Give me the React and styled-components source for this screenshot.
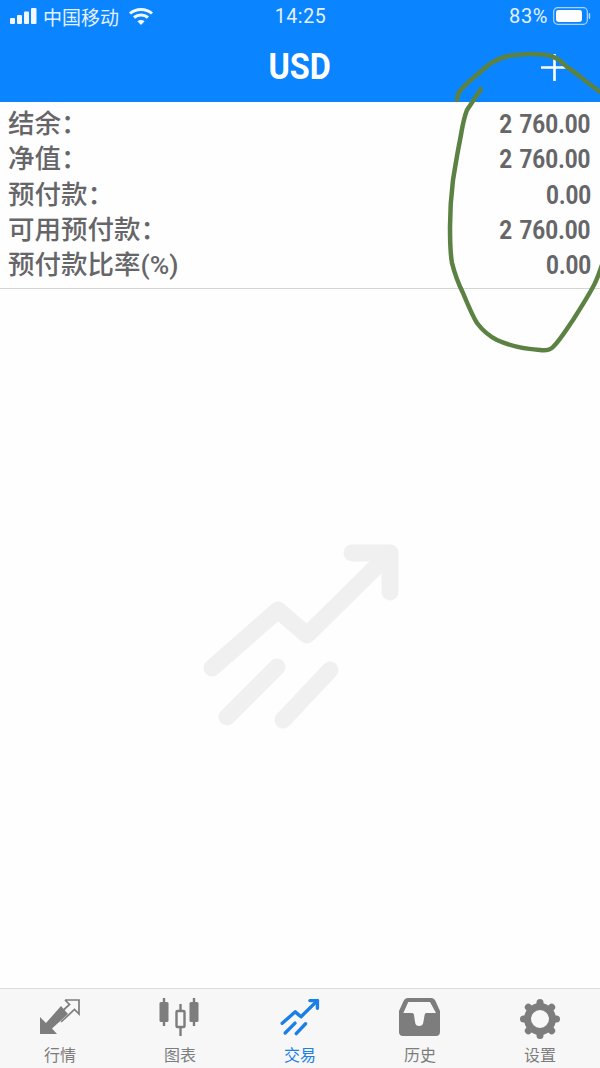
import React from "react";
import styled, { createGlobalStyle } from "styled-components";

const GlobalStyle = createGlobalStyle`
  html, body {
    margin: 0;
    padding: 0;
    background: #fff;
  }
`;

const CJK = `"Noto Sans CJK SC", "Noto Sans", sans-serif`;
const BLUE = "#0a84ff";

const Page = styled.div`
  position: relative;
  width: 600px;
  height: 1068px;
  display: flex;
  flex-direction: column;
  overflow: hidden;
  background: #fefefe;
  font-family: Roboto, ${CJK};
`;

const Header = styled.header`
  height: 102px;
  flex: none;
  background: ${BLUE};
  color: #fff;
  display: flex;
  flex-direction: column;
`;

const StatusBar = styled.div`
  height: 32px;
  padding: 0 9px 0 10px;
  display: grid;
  grid-template-columns: 1fr auto 1fr;
  align-items: center;
  font-size: 20px;
  color: #e4f1ff;
`;

const StatusLeft = styled.div`
  display: flex;
  align-items: center;
  gap: 5px;
  font-family: ${CJK};
  font-size: 19px;
`;

const StatusRight = styled.div`
  display: flex;
  align-items: center;
  justify-content: flex-end;
  gap: 5px;
  letter-spacing: 0.6px;
`;

const Time = styled.div`
  font-size: 19.5px;
  letter-spacing: 0.6px;
`;

const Wifi = styled.svg`
  margin-left: 4px;
`;

const TitleBar = styled.div`
  flex: 1;
  display: grid;
  grid-template-columns: 1fr auto 1fr;
  align-items: center;
`;

const Title = styled.h1`
  grid-column: 2;
  margin: 0;
  font-size: 36px;
  font-weight: 700;
  line-height: 1;
  transform: scaleX(0.9);
`;

const PlusButton = styled.div`
  grid-column: 3;
  justify-self: end;
  display: flex;
  margin-right: 32px;
`;

const Summary = styled.section`
  flex: none;
  height: 187px;
  padding-top: 3px;
  box-sizing: border-box;
  border-bottom: 1px solid #d4d4d4;
`;

const Row = styled.div`
  height: 35.3px;
  padding: 0 9px 0 8px;
  display: flex;
  align-items: center;
  justify-content: space-between;
  color: #666669;
`;

const Label = styled.span`
  font-size: 26.5px;
  font-weight: 500;
  padding-bottom: 2px;
`;

const Value = styled.span`
  font-size: 25px;
  font-weight: 700;
  word-spacing: 2px;
  display: inline-block;
  padding-top: 4px;
  transform: scaleX(0.9);
  transform-origin: right center;
`;

const Empty = styled.main`
  flex: 1;
  display: flex;
  align-items: center;
  justify-content: center;
  padding: 0 0 6px 3px;
`;

const TabBar = styled.nav`
  flex: none;
  height: 79px;
  display: grid;
  grid-template-columns: repeat(5, 120px);
  background: #f7f7f7;
  border-top: 1px solid #dcdcdc;
`;

const Tab = styled.div`
  display: flex;
  flex-direction: column;
  align-items: center;
  color: ${({ $active }) => ($active ? "#1a7fe6" : "#7d7d7d")};
  font-family: ${CJK};
  font-size: 16px;
  line-height: 20px;
`;

const TabIcon = styled.div`
  height: 46px;
  padding-top: 9px;
  box-sizing: border-box;
  display: flex;
  justify-content: center;
  margin-bottom: 9px;
`;

const Scribble = styled.svg`
  position: absolute;
  left: 0;
  top: 0;
  pointer-events: none;
`;

const SignalIcon = () => (
  <svg width="28" height="16" viewBox="0 0 28 16" fill="#f2f8ff">
    <rect x="0" y="10" width="5" height="6" rx="1" />
    <rect x="7" y="7" width="5" height="9" rx="1" />
    <rect x="14" y="3.5" width="5" height="12.5" rx="1" />
    <rect x="21" y="0" width="5.5" height="16" rx="1" />
  </svg>
);

const WifiIcon = () => (
  <Wifi width="26" height="19" viewBox="0 0 26 19" fill="none" stroke="#f2f8ff" strokeWidth="3">
    <path d="M2 6.5C8 1 18 1 24 6.5" />
    <path d="M6 10.5C10 7 16 7 20 10.5" />
    <path d="M13 18L9.4 14.2C11.4 12.6 14.6 12.6 16.6 14.2Z" fill="#f2f8ff" stroke="none" />
  </Wifi>
);

const BatteryIcon = () => (
  <svg width="38" height="18" viewBox="0 0 38 18">
    <rect x="0.7" y="0.7" width="33.6" height="16.6" rx="4" fill="none" stroke="#a9d3ff" strokeWidth="1.2" />
    <rect x="3" y="3" width="26" height="12" rx="2.4" fill="#fff" />
    <rect x="35.6" y="6" width="1.6" height="6" rx="0.8" fill="#a9d3ff" />
  </svg>
);

const TrendIcon = ({ width, height, color, weight }) => (
  <svg width={width} height={height} viewBox="200 540 204 192" fill="none" stroke={color} strokeWidth={weight} strokeLinecap="round" strokeLinejoin="round">
    <path d="M212 668L278 610L307 635L390 553" />
    <path d="M352 553H390V592" />
    <path d="M277 667L227 717" />
    <path d="M330 670L283 720" />
  </svg>
);

const QuotesIcon = () => (
  <svg width="42" height="38" viewBox="0 0 42 38">
    <path d="M1 19V36H18L13 30.5L29 16L22 8L7 25Z" fill="#7d7d7d" />
    <path d="M26 2H40V16L35.5 11.5L22 24M26 2L30.5 6.5L24.5 12" fill="none" stroke="#7d7d7d" strokeWidth="1.7" />
  </svg>
);

const ChartIcon = () => (
  <svg width="42" height="38" viewBox="0 0 42 38" fill="#7d7d7d" stroke="#7d7d7d">
    <path d="M5 0V28M35 0V28M21.5 6V38" strokeWidth="2.4" />
    <rect x="0.5" y="4" width="9" height="20" rx="1.5" stroke="none" />
    <rect x="30.5" y="4" width="9" height="20" rx="1.5" stroke="none" />
    <rect x="17.5" y="13" width="8" height="16" rx="1" fill="#f7f7f7" strokeWidth="2.4" />
  </svg>
);

const InboxIcon = () => (
  <svg width="42" height="38" viewBox="0 0 42 38">
    <path
      fillRule="evenodd"
      fill="#7d7d7d"
      d="M9 0H32C34 0 35.5 1 36.5 3L41 13V34C41 36.5 39.5 38 37 38H4C1.5 38 0 36.5 0 34V13L4.5 3C5.5 1 7 0 9 0ZM9.3 4L4.3 15H12.7C14 15 14.6 15.5 15 17L16 24C16.4 27 18 28 20.2 28C22.4 28 24 27 24.4 24L25.6 17C26 15.5 26.6 15 27.7 15H37L31 4Z"
    />
  </svg>
);

const GearIcon = () => {
  const teeth = [0, 45, 90, 135, 180, 225, 270, 315];
  return (
    <svg width="42" height="42" viewBox="-21 -21 42 42" fill="none" stroke="#7d7d7d">
      <circle r="12.5" strokeWidth="7" />
      {teeth.map((deg) => (
        <path key={deg} d="M0 -14V-16.5" strokeWidth="7" strokeLinecap="round" transform={`rotate(${deg})`} />
      ))}
    </svg>
  );
};

const rows = [
  ["结余：", "2 760.00"],
  ["净值：", "2 760.00"],
  ["预付款：", "0.00"],
  ["可用预付款：", "2 760.00"],
  ["预付款比率(%)", "0.00"],
];

const tabs = [
  { name: "行情", icon: <QuotesIcon /> },
  { name: "图表", icon: <ChartIcon /> },
  { name: "交易", icon: <TrendIcon width={42} height={38} color="#1a7fe6" weight={17} />, active: true },
  { name: "历史", icon: <InboxIcon /> },
  { name: "设置", icon: <GearIcon /> },
];

export default function App() {
  return (
    <Page>
      <GlobalStyle />
      <Header>
        <StatusBar>
          <StatusLeft>
            <SignalIcon />
            <span>中国移动</span>
            <WifiIcon />
          </StatusLeft>
          <Time>14:25</Time>
          <StatusRight>
            <span>83%</span>
            <BatteryIcon />
          </StatusRight>
        </StatusBar>
        <TitleBar>
          <Title>USD</Title>
          <PlusButton>
            <svg width="27" height="27" viewBox="0 0 27 27" stroke="#fff" strokeWidth="2.6">
              <path d="M13.5 0V27M0 13.5H27" />
            </svg>
          </PlusButton>
        </TitleBar>
      </Header>
      <Summary>
        {rows.map(([label, value]) => (
          <Row key={label}>
            <Label>{label}</Label>
            <Value>{value}</Value>
          </Row>
        ))}
      </Summary>
      <Empty>
        <TrendIcon width={204} height={192} color="#f0f0f0" weight={17} />
      </Empty>
      <TabBar>
        {tabs.map((tab) => (
          <Tab key={tab.name} $active={tab.active}>
            <TabIcon>{tab.icon}</TabIcon>
            <span>{tab.name}</span>
          </Tab>
        ))}
      </TabBar>
      {/* hand-drawn marker circle on top of the screenshot */}
      <Scribble width="600" height="1068" viewBox="0 0 600 1068" fill="none" stroke="#5c8243" strokeWidth="4.5" strokeLinecap="round" strokeLinejoin="round">
        <path d="M457 100C457 92 462 88 473 78C482 71 486 66 493 62C502 57 510 55 517 55C530 53 538 54 547 55C556 57 560 60 567 67C578 74 588 84 602 93" />
        <path d="M481 89L467 110C463 120 462 130 460 140C457 155 455 168 453 180C451 196 450 212 450 227C450 240 450 252 452 263C455 275 458 283 463 293C468 305 472 315 477 323C483 331 489 336 497 340C510 346 525 349 540 350C547 351 550 350 553 347C560 340 566 330 573 320C580 309 587 298 593 287C597 280 599 273 602 265" />
      </Scribble>
    </Page>
  );
}
